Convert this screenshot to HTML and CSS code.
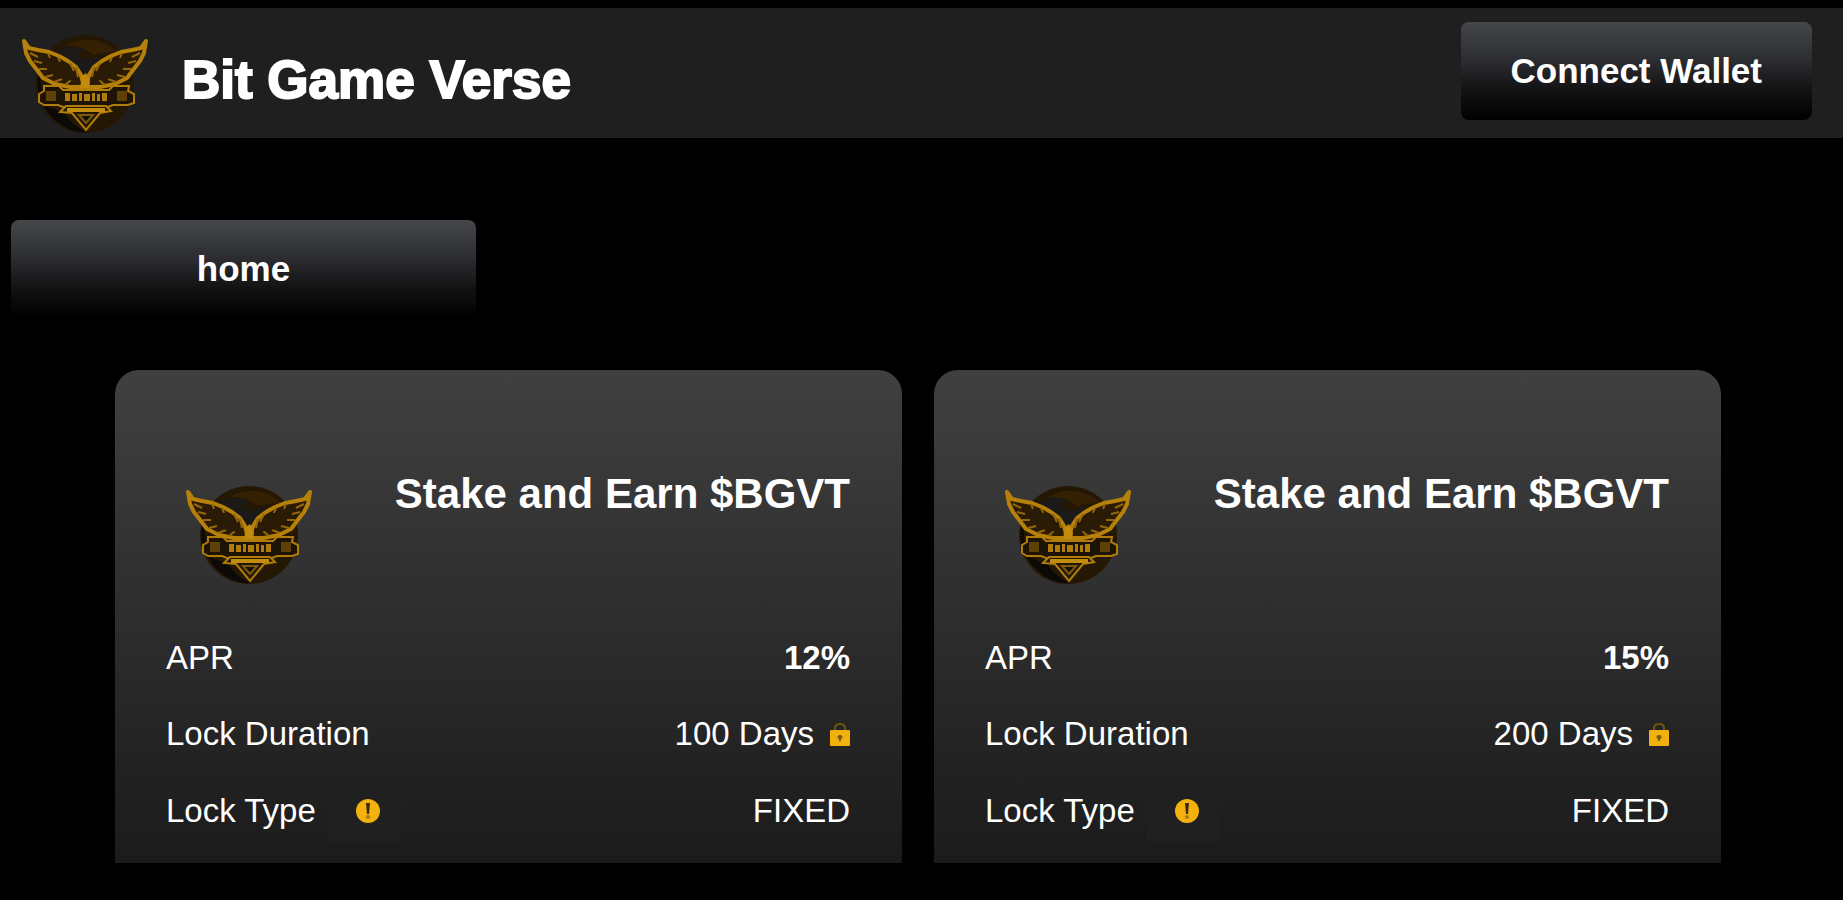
FILE: index.html
```html
<!DOCTYPE html>
<html lang="en">
<head>
	<meta charset="UTF-8" />
	<meta name="viewport" content="width=device-width, initial-scale=1" />
	<title>Bit Game Verse</title>
	<link rel="stylesheet" href="styles.css">
</head>
<body>
	<!-- shared shapes -->
	<svg class="sprite" aria-hidden="true">
		<symbol id="eagle" viewBox="0 0 130 102">
			<circle cx="65" cy="51" r="49" fill="#241703" />
			<path d="M20 34Q12 60 30 82Q46 100 66 99Q52 92 44 80L22 72Z" fill="#0b0a08" />
			<path d="M38 18Q52 10 64 16L58 22Q64 28 74 26L84 22L66 42L44 26Z" fill="#1b1a18" />
			<path d="M46 13Q64 2 84 10Q92 14 98 20Q84 18 74 22Q62 12 46 13Z" fill="#352004" />
			<g fill="#2b1b04" stroke="#b5810a" stroke-width="4" stroke-linejoin="round">
				<path d="M4 8L9 15L18 17L29 19L39 23L48 28L56 34L61 42L64 54L50 54L35 51L23 45L17 37L10 28L6 20Z" />
				<path d="M126 8L121 15L112 17L101 19L91 23L82 28L74 34L69 42L66 54L80 54L95 51L107 45L113 37L120 28L124 20Z" />
			</g>
			<g fill="none" stroke="#94670a" stroke-width="2">
				<path d="M10 20L18 24M14 28L22 30M19 36L27 36M25 44L33 42M34 49L42 46M45 52L51 47M50 30L54 38M56 34L58 44M28 20L30 25M38 24L40 29" />
				<path d="M120 20L112 24M116 28L108 30M111 36L103 36M105 44L97 42M96 49L88 46M85 52L79 47M80 30L76 38M74 34L72 44M102 20L100 25M92 24L90 29" />
			</g>
			<path d="M21 23L38 28L51 38L54 48L39 45L29 38Z" fill="#2a1b07" />
			<path d="M109 23L92 28L79 38L76 48L91 45L101 38Z" fill="#2a1b07" />
			<path d="M62 43L66 40L70 49L69 55L60 55Z" fill="#c18c0e" />
			<path d="M24 53H39L43 57H89L93 53H109L108 58L114 61V70L108 72H93L88 74H43L38 72H24L19 69V61L24 58Z" fill="#1e1405" stroke="#b07d0a" stroke-width="2" />
			<path d="M26 58H36V68H26ZM97 58H107V68H97Z" fill="#5d4106" />
			<path d="M45 60H50V68H45ZM52 61H57V68H52ZM59 60H62V68H59ZM64 61H70V68H64ZM72 60H75V68H72ZM77 61H80V68H77ZM82 60H87V68H82Z" fill="#b07d0a" />
			<path d="M46 73H86L91 78L80 80L66 97L52 80L40 79Z" fill="#241703" stroke="#b07d0a" stroke-width="2" />
			<path d="M47 75H85V79H47Z" fill="#c28d10" />
			<path d="M59 82H73L66 90Z" fill="#150f05" stroke="#7d590a" stroke-width="2" />
		</symbol>
		<symbol id="lock" viewBox="0 0 20 25">
			<path d="M5 10V6Q5 2 10 2Q15 2 15 6V10" fill="none" stroke="#6b5610" stroke-width="2" />
			<rect x="0" y="8" width="20" height="16" rx="1" fill="#f2b10d" />
			<path d="M10 13A2 2 0 0 1 11 17V19H9V17A2 2 0 0 1 10 13Z" fill="#7c5c10" />
		</symbol>
		<symbol id="info" viewBox="0 0 24 24">
			<circle cx="12" cy="12" r="12" fill="#f2b10d" />
			<path d="M10 4H14L13 15H11Z" fill="#3a2c08" />
			<circle cx="12" cy="18" r="2" fill="#a67b0c" />
		</symbol>
	</svg>

	<header class="topbar">
		<div class="brand">
			<svg class="logo" role="img" aria-label="Bit Game Verse logo"><use href="#eagle" /></svg>
			<h1 class="brandName">Bit Game Verse</h1>
		</div>
		<button class="btn connect" type="button">Connect Wallet</button>
	</header>

	<nav class="menu">
		<a class="btn home" href="#">home</a>
	</nav>

	<main class="pools">
		<section class="pool">
			<div class="poolHead">
				<svg class="logo" aria-hidden="true"><use href="#eagle" /></svg>
				<h2 class="poolTitle">Stake and Earn $BGVT</h2>
			</div>
			<dl class="poolInfo">
				<div class="row">
					<dt>APR</dt>
					<dd class="apr">12%</dd>
				</div>
				<div class="row">
					<dt>Lock Duration</dt>
					<dd>100 Days <svg class="lock" aria-hidden="true"><use href="#lock" /></svg></dd>
				</div>
				<div class="row">
					<dt>Lock Type <button class="tip" type="button" aria-label="About lock type"><svg class="info" aria-hidden="true"><use href="#info" /></svg></button></dt>
					<dd>FIXED</dd>
				</div>
			</dl>
		</section>
		<section class="pool">
			<div class="poolHead">
				<svg class="logo" aria-hidden="true"><use href="#eagle" /></svg>
				<h2 class="poolTitle">Stake and Earn $BGVT</h2>
			</div>
			<dl class="poolInfo">
				<div class="row">
					<dt>APR</dt>
					<dd class="apr">15%</dd>
				</div>
				<div class="row">
					<dt>Lock Duration</dt>
					<dd>200 Days <svg class="lock" aria-hidden="true"><use href="#lock" /></svg></dd>
				</div>
				<div class="row">
					<dt>Lock Type <button class="tip" type="button" aria-label="About lock type"><svg class="info" aria-hidden="true"><use href="#info" /></svg></button></dt>
					<dd>FIXED</dd>
				</div>
			</dl>
		</section>
	</main>
</body>
</html>
```
FILE: styles.css
```css
*{
	margin: 0;padding: 0;
	box-sizing: border-box;
}
body{
	padding-top: 8px;
	background: #000;
	color: #fff;
	font-family: "Liberation Sans", Arial, sans-serif;
}
.sprite{
	display: none;
}
.logo{
	display: block;
	flex: none;
	width: 130px;height: 102px;
}

/* header */
.topbar{
	display: flex;
	justify-content: space-between;
	align-items: flex-start;
	padding: 14px 31px 18px 20px;
	background: #1f1f1f;
}
.brand{
	display: flex;
	align-items: flex-start;
	gap: 32px;
	height: 98px;
}
.brand .logo{
	margin-top: 11px;
}
.brandName{
	padding-top: 28px;
	font-size: 53px;
	line-height: 60px;
	-webkit-text-stroke: 2px #fff;
}
.btn{
	display: block;
	height: 98px;
	border: 0;
	border-radius: 8px;
	background: linear-gradient(#46474b, #2b2c30 40%, #121213 70%, #000);
	color: #fff;
	font: bold 35px/98px "Liberation Sans", Arial, sans-serif;
	text-align: center;
	text-decoration: none;
	cursor: pointer;
}
.connect{
	padding: 0 50px;
}

/* menu */
.menu{
	padding: 82px 11px 52px;
}
.home{
	width: 465px;
	max-width: 100%;
}

/* staking pools */
.pools{
	display: grid;
	grid-template-columns: 1fr 1fr;
	gap: 32px;
	padding: 0 122px 36px 115px;
}
.pool{
	padding: 100px 52px 13px 51px;
	border-radius: 24px 24px 0 0;
	background: linear-gradient(#404040, #1b1b1b);
}
.poolHead{
	display: flex;
	justify-content: space-between;
	height: 150px;
	padding-left: 18px;
}
.poolHead .logo{
	margin-top: 14px;
}
.poolTitle{
	font-size: 42px;
	line-height: 48px;
}
.row{
	display: flex;
	justify-content: space-between;
	align-items: center;
	min-height: 76px;
	font-size: 33px;
}
.row dt,.row dd{
	display: flex;
	align-items: center;
}
.row dd{
	gap: 16px;
}
.apr{
	font-weight: bold;
}
.lock{
	width: 20px;height: 25px;
}
.tip{
	display: flex;
	justify-content: center;
	align-items: center;
	width: 74px;height: 60px;
	margin: 9px 0 9px 11px;
	padding-left: 8px;
	border: 0;
	background: #202020;
	cursor: pointer;
}
.info{
	width: 24px;height: 24px;
}
```
